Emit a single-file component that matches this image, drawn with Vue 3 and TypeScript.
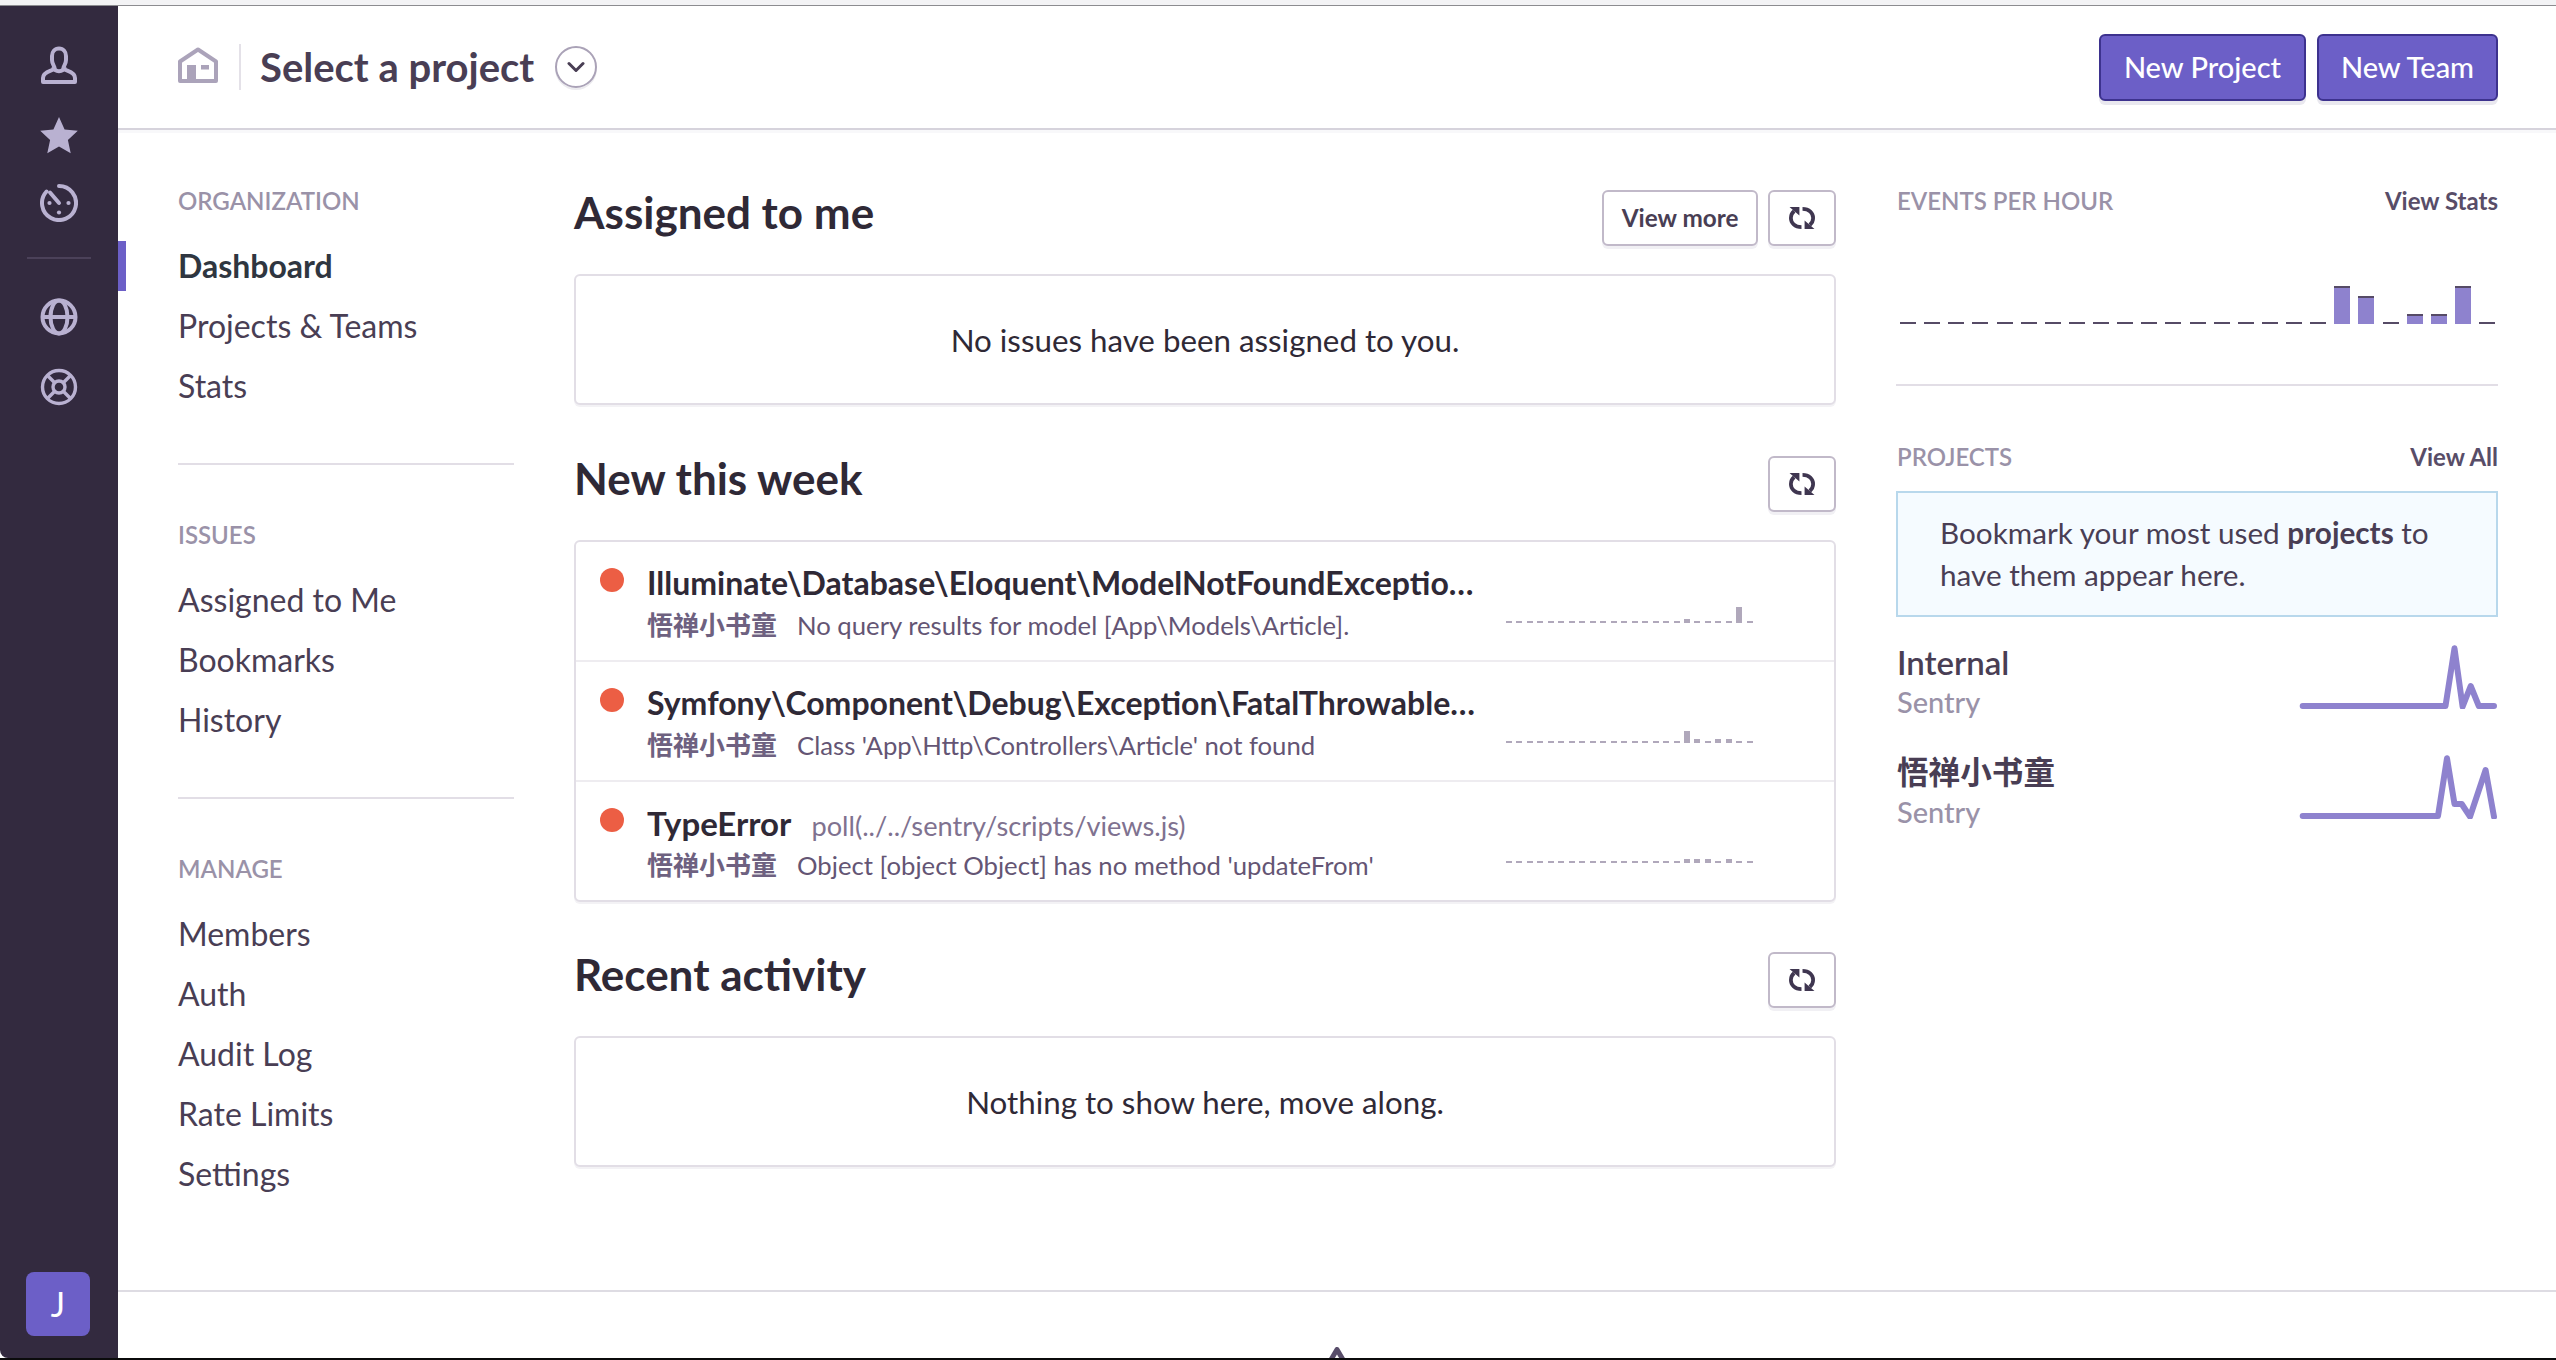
<script setup lang="ts">
const navGroups = [
  { label: 'Organization', items: ['Dashboard', 'Projects & Teams', 'Stats'] },
  { label: 'Issues', items: ['Assigned to Me', 'Bookmarks', 'History'] },
  { label: 'Manage', items: ['Members', 'Auth', 'Audit Log', 'Rate Limits', 'Settings'] },
]

function series(n: number, over: Record<number, number>): number[] {
  return Array.from({ length: n }, (_, i) => over[i] ?? 0)
}

const eventBars = series(25, { 18: 38, 19: 28, 21: 10, 22: 10, 23: 38 })

const issues = [
  {
    title: 'Illuminate\\Database\\Eloquent\\ModelNotFoundExceptio…',
    culprit: '',
    kind: '',
    message: 'No query results for model [App\\Models\\Article].',
    bars: series(24, { 17: 4, 22: 16 }),
  },
  {
    title: 'Symfony\\Component\\Debug\\Exception\\FatalThrowable…',
    culprit: '',
    kind: '',
    message: "Class 'App\\Http\\Controllers\\Article' not found",
    bars: series(24, { 17: 12, 18: 4, 20: 4, 21: 4 }),
  },
  {
    title: 'TypeError',
    culprit: 'poll(../../sentry/scripts/views.js)',
    kind: 'short',
    message: "Object [object Object] has no method 'updateFrom'",
    bars: series(24, { 17: 4, 18: 4, 19: 4, 21: 4 }),
  },
]

const projects = [
  { name: 'Internal', cjk: false, points: '3.7,63 146.5,63 155.5,5.3 163.6,63.7 171.7,43 179.8,63 195,63' },
  { name: '悟禅小书童', cjk: true, points: '3.7,63 139,63 148,5.3 155.5,51 162.7,51 171,63.7 186.6,17 195,63.7' },
]
</script>

<template>
  <div class="page">
    <div class="strip"></div>
    <div class="shell">
      <aside class="rail">
        <svg class="ri wide-gap" width="38" height="38" viewBox="0 0 38 38" fill="none">
          <path d="M19 2.5C14.5 2.5 12 6 12 10V14C12 18 14.5 20 14.5 22C14.5 25 3 24.5 3 32V36H35V32C35 24.5 23.5 25 23.5 22C23.5 20 26 18 26 14V10C26 6 23.5 2.5 19 2.5Z" stroke-linejoin="round" />
          <path d="M13 21C15 26.5 23 26.5 25 21" />
        </svg>
        <svg class="ri star" width="40" height="38" viewBox="0 0 40 38">
          <path d="M20 1L25.6 13.5L38.8 14.8L28.9 24L31.7 37.2L20 30.4L8.3 37.2L11.1 24L1.2 14.8L14.4 13.5Z" />
        </svg>
        <svg class="ri" width="38" height="38" viewBox="0 0 38 38" fill="none">
          <path d="M19 2A17 17 0 1 1 6.5 7.5" stroke-linecap="round" />
          <path d="M19 19L10 8.5" stroke-linecap="round" />
          <circle class="dotf" cx="9.5" cy="19" r="2.1" />
          <circle class="dotf" cx="28.5" cy="19" r="2.1" />
          <circle class="dotf" cx="19" cy="28.5" r="2.1" />
        </svg>
        <div class="rail-sep"></div>
        <svg class="ri wide-gap" width="38" height="38" viewBox="0 0 38 38" fill="none">
          <circle cx="19" cy="19" r="16.5" />
          <ellipse cx="19" cy="19" rx="8.5" ry="16.5" />
          <path d="M3 19H35" />
        </svg>
        <svg class="ri buoy" width="38" height="38" viewBox="0 0 38 38" fill="none">
          <circle cx="19" cy="19" r="16.5" />
          <circle cx="19" cy="19" r="6" />
          <path d="M7.5 7.5L14.7 14.7M30.5 7.5L23.3 14.7M7.5 30.5L14.7 23.3M30.5 30.5L23.3 23.3" />
        </svg>
        <div class="avatar">J</div>
      </aside>

      <div class="main">
        <header class="topbar">
          <svg class="home" width="40" height="36" viewBox="0 0 40 36">
            <path d="M2 34V14.5L20 2.5L38 14.5V34Z" fill="none" stroke="#aba3ba" stroke-width="4" stroke-linejoin="round" />
            <rect x="9" y="18" width="9" height="16" fill="#aba3ba" />
            <rect x="23" y="18" width="8" height="4.5" fill="#aba3ba" />
          </svg>
          <span class="tb-sep"></span>
          <span class="tb-title">Select a project</span>
          <span class="chev">
            <svg width="18" height="12" viewBox="0 0 18 12" fill="none">
              <path d="M2 2.5L9 9.5L16 2.5" stroke="#493e54" stroke-width="3" stroke-linecap="round" stroke-linejoin="round" />
            </svg>
          </span>
          <div class="tb-actions">
            <a class="btn-primary np">New Project</a>
            <a class="btn-primary nt">New Team</a>
          </div>
        </header>

        <div class="content">
          <nav class="nav">
            <template v-for="(g, gi) in navGroups" :key="g.label">
              <div v-if="gi > 0" class="nav-sep"></div>
              <div class="label">{{ g.label }}</div>
              <ul class="nav-list">
                <li v-for="item in g.items" :key="item" class="nav-item" :class="{ active: item === 'Dashboard' }">{{ item }}</li>
              </ul>
            </template>
          </nav>

          <section class="center">
            <div class="sec-head">
              <h2>Assigned to me</h2>
              <div class="sec-tools">
                <a class="btn vm">View more</a>
                <a class="btn refresh">
                  <svg width="26" height="22" viewBox="0 0 25 21" fill="none">
                    <path d="M12 19.2C5.5 19.2 1.8 15 1.8 10.5C1.8 7.5 3 5.5 5 3.8M13 1.8C19.5 1.8 23.2 6 23.2 10.5C23.2 13.5 22 15.5 20 17.2" stroke="#3f3650" stroke-width="3.6" />
                    <path d="M.5 0H10V8ZM24.5 21H15V13Z" fill="#3f3650" />
                  </svg>
                </a>
              </div>
            </div>
            <div class="card empty">No issues have been assigned to you.</div>

            <div class="sec-head">
              <h2>New this week</h2>
              <div class="sec-tools">
                <a class="btn refresh">
                  <svg width="26" height="22" viewBox="0 0 25 21" fill="none">
                    <path d="M12 19.2C5.5 19.2 1.8 15 1.8 10.5C1.8 7.5 3 5.5 5 3.8M13 1.8C19.5 1.8 23.2 6 23.2 10.5C23.2 13.5 22 15.5 20 17.2" stroke="#3f3650" stroke-width="3.6" />
                    <path d="M.5 0H10V8ZM24.5 21H15V13Z" fill="#3f3650" />
                  </svg>
                </a>
              </div>
            </div>
            <div class="card issues">
              <div v-for="it in issues" :key="it.title" class="issue">
                <span class="dot"></span>
                <div class="issue-text">
                  <div class="issue-title" :class="it.kind">
                    <span>{{ it.title }}</span>
                    <span v-if="it.culprit" class="t-culprit">{{ it.culprit }}</span>
                  </div>
                  <div class="issue-sub">
                    <b>悟禅小书童</b>
                    <span>{{ it.message }}</span>
                  </div>
                </div>
                <div class="mini">
                  <i v-for="(h, i) in it.bars" :key="i" :style="{ height: Math.max(h, 2) + 'px' }"></i>
                </div>
              </div>
            </div>

            <div class="sec-head">
              <h2>Recent activity</h2>
              <div class="sec-tools">
                <a class="btn refresh">
                  <svg width="26" height="22" viewBox="0 0 25 21" fill="none">
                    <path d="M12 19.2C5.5 19.2 1.8 15 1.8 10.5C1.8 7.5 3 5.5 5 3.8M13 1.8C19.5 1.8 23.2 6 23.2 10.5C23.2 13.5 22 15.5 20 17.2" stroke="#3f3650" stroke-width="3.6" />
                    <path d="M.5 0H10V8ZM24.5 21H15V13Z" fill="#3f3650" />
                  </svg>
                </a>
              </div>
            </div>
            <div class="card empty">Nothing to show here, move along.</div>
          </section>

          <aside class="right">
            <div class="r-head">
              <span class="label">Events per hour</span>
              <a class="r-link">View Stats</a>
            </div>
            <div class="bars">
              <i v-for="(h, i) in eventBars" :key="i" :style="{ height: Math.max(h, 2) + 'px' }"></i>
            </div>
            <div class="r-sep"></div>
            <div class="r-head">
              <span class="label">Projects</span>
              <a class="r-link">View All</a>
            </div>
            <div class="alert">Bookmark your most used <b>projects</b> to have them appear here.</div>
            <div class="proj-list">
              <div v-for="p in projects" :key="p.name" class="proj">
                <div class="proj-text">
                  <div class="proj-name" :class="{ cjk: p.cjk }">{{ p.name }}</div>
                  <div class="proj-org">Sentry</div>
                </div>
                <svg width="199" height="66" viewBox="0 0 199 66" fill="none">
                  <polyline :points="p.points" stroke="#8e82ce" stroke-width="6" stroke-linecap="round" stroke-linejoin="round" />
                </svg>
              </div>
            </div>
          </aside>
        </div>

        <footer class="foot">
          <svg width="22" height="20" viewBox="0 0 22 20" fill="none">
            <path d="M2.5 17L11 2.5L19.5 17" stroke="#584d6a" stroke-width="5" stroke-linejoin="round" />
          </svg>
        </footer>
      </div>
    </div>
    <div class="edge"></div>
  </div>
</template>

<style>
html, body { margin: 0; background: #fff; }
</style>

<style scoped>
.page {
  width: 2556px;
  height: 1360px;
  display: grid;
  grid-template-rows: 6px 1fr 2px;
  overflow: hidden;
  font-family: Lato, "Noto Sans CJK SC", sans-serif;
  color: #493e54;
  background: #fff;
}
.strip { background: #f3f3f5; border-bottom: 1px solid #8c8c90; }
.edge { background: #0b0b0c; }
.shell { display: flex; min-height: 0; }

.rail {
  width: 118px;
  flex: none;
  background: #332a3f;
  border-bottom-left-radius: 8px;
  display: flex;
  flex-direction: column;
  align-items: center;
  padding: 40px 0 22px;
  box-sizing: border-box;
}
.ri { flex: none; margin-bottom: 30px; }
.ri.wide-gap { margin-bottom: 32px; }
.ri :is(path, circle, ellipse) { stroke: #b9b1d1; stroke-width: 4; }
.ri.buoy :is(path, circle) { stroke-width: 3.4; }
.ri.star path { fill: #b9b1d1; stroke: none; }
.ri .dotf { fill: #b9b1d1; stroke: none; }
.rail-sep { width: 64px; height: 2px; background: #4b4159; margin: 5px 0 39px; }
.avatar {
  margin: auto 2px 0 0;
  width: 64px;
  height: 64px;
  border-radius: 8px;
  background: #6c5fc7;
  color: #fff;
  font-size: 34px;
  line-height: 64px;
  text-align: center;
}

.main { flex: 1; min-width: 0; display: flex; flex-direction: column; }
.topbar {
  height: 124px;
  flex: none;
  box-sizing: border-box;
  border-bottom: 2px solid #d6d3dc;
  box-shadow: 0 3px 0 #f8f8fa;
  display: flex;
  align-items: center;
  padding: 0 58px 0 60px;
}
.home { flex: none; margin-bottom: 4px; }
.tb-sep { width: 2px; height: 46px; background: #e4e1e8; margin: 0 19px 0 21px; }
.tb-title { font-size: 40px; font-weight: 700; color: #493e54; line-height: 48px; }
.chev {
  width: 42px;
  height: 42px;
  box-sizing: border-box;
  margin-left: 21px;
  border: 2px solid #aaa2b7;
  border-radius: 50%;
  display: flex;
  align-items: center;
  justify-content: center;
  box-shadow: 0 2px 0 #ecebef;
}
.tb-actions { margin-left: auto; display: flex; gap: 11px; padding-top: 1px; }
.btn-primary {
  height: 67px;
  box-sizing: border-box;
  border: 2px solid #3d328e;
  border-radius: 6px;
  background: #6c5fc7;
  color: #fff;
  font-size: 29px;
  font-weight: 500;
  line-height: 62px;
  text-align: center;
  box-shadow: 0 4px 0 #e9e8ef;
}
.np { width: 207px; }
.nt { width: 181px; }

.content { flex: none; height: 1160px; display: flex; gap: 60px; padding: 0 58px 0 60px; border-bottom: 2px solid #dedce3; box-sizing: content-box; }
.nav { width: 336px; flex: none; padding-top: 57px; }
.label {
  font-size: 24px;
  font-weight: 600;
  line-height: 28px;
  text-transform: uppercase;
  color: #9a92a8;
}
.nav-list { list-style: none; margin: 21px 0 0; padding: 0; }
.nav-item {
  position: relative;
  height: 60px;
  line-height: 60px;
  font-size: 32px;
  color: #493e54;
}
.nav-item.active { font-weight: 700; color: #2f3640; }
.nav-item.active::before {
  content: "";
  position: absolute;
  left: -60px;
  top: 5px;
  width: 8px;
  height: 50px;
  background: #6c5fc7;
}
.nav-sep { height: 2px; background: #e2dee6; margin: 47px 0 56px; }

.center { width: 1262px; flex: none; padding-top: 60px; }
.sec-head { height: 56px; display: flex; align-items: flex-start; justify-content: space-between; margin-bottom: 28px; }
.sec-head h2 { margin: 0; font-size: 44px; font-weight: 700; color: #2f2936; line-height: 44px; }
.sec-tools { display: flex; gap: 10px; }
.btn {
  height: 56px;
  box-sizing: border-box;
  border: 2px solid #c1b9c9;
  border-radius: 6px;
  background: #fff;
  color: #493e54;
  display: flex;
  align-items: center;
  justify-content: center;
  box-shadow: 0 3px 0 #f1f0f4;
}
.vm { width: 156px; font-size: 24.3px; font-weight: 700; padding-bottom: 2px; }
.refresh { width: 68px; }
.card {
  box-sizing: border-box;
  border: 2px solid #e2dee6;
  border-radius: 6px;
  background: #fff;
  box-shadow: 0 2px 0 #f3f2f5;
}
.empty {
  height: 131px;
  margin-bottom: 51px;
  display: flex;
  align-items: center;
  justify-content: center;
  font-size: 31.3px;
  color: #2f2936;
}
.issues { height: 362px; margin-bottom: 50px; }
.issue {
  height: 120px;
  box-sizing: border-box;
  border-bottom: 2px solid #eeecf0;
  display: flex;
  align-items: flex-start;
  padding: 26px 0 0 24px;
}
.issue:last-child { border-bottom: 0; height: 118px; }
.dot { width: 24px; height: 24px; border-radius: 50%; background: #ec5e44; flex: none; }
.issue-text { width: 830px; flex: none; margin: -5px 0 0 23px; }
.issue-title {
  height: 40px;
  line-height: 40px;
  font-size: 32px;
  font-weight: 700;
  color: #2f2936;
  white-space: nowrap;
}
.issue-title.short { font-size: 33px; }
.t-culprit { font-size: 27.2px; font-weight: 400; color: #7f7290; margin-left: 20px; }
.issue-sub { margin-top: 4px; height: 36px; line-height: 36px; font-size: 25.7px; color: #645574; white-space: nowrap; }
.issue-sub b { font-size: 26px; font-weight: 700; margin-right: 20px; color: #6e6180; }
.mini {
  margin: 25px 0 0 29px;
  width: 247px;
  height: 30px;
  display: flex;
  justify-content: space-between;
  align-items: flex-end;
  flex: none;
}
.mini i { display: block; width: 6px; background: #b0a8bb; }

.right { width: 602px; flex: none; padding-top: 57px; }
.r-head { display: flex; justify-content: space-between; align-items: center; height: 28px; padding-left: 1px; }
.r-link { font-size: 24px; font-weight: 700; color: #584d68; line-height: 28px; }
.bars {
  height: 109px;
  box-sizing: border-box;
  padding: 0 3px 0 4px;
  display: flex;
  justify-content: space-between;
  align-items: flex-end;
}
.bars i {
  display: block;
  width: 16px;
  box-sizing: border-box;
  background: #8e82ce;
  border-top: 2px solid #564b66;
}
.r-sep { height: 2px; background: #e2dee6; margin: 60px 0 57px; }
.alert {
  margin-top: 20px;
  height: 126px;
  box-sizing: border-box;
  border: 2px solid #b8d8ec;
  background: #f5fbff;
  padding: 19px 30px 19px 42px;
  font-size: 29.7px;
  line-height: 42px;
  color: #493e54;
}
.proj-list { margin-top: 26px; }
.proj { height: 110px; display: flex; justify-content: space-between; align-items: flex-start; }
.proj-text { padding-left: 1px; }
.proj-name { font-size: 33px; font-weight: 600; line-height: 38px; color: #493e54; }
.proj-name.cjk { font-size: 31.6px; }
.proj-org { font-size: 29px; font-weight: 500; line-height: 34px; margin-top: 4px; color: #9a92a8; }

.foot { flex: 1; min-height: 0; overflow: hidden; display: flex; justify-content: center; padding-top: 55px; box-sizing: border-box; }
.foot svg { flex: none; }
</style>
